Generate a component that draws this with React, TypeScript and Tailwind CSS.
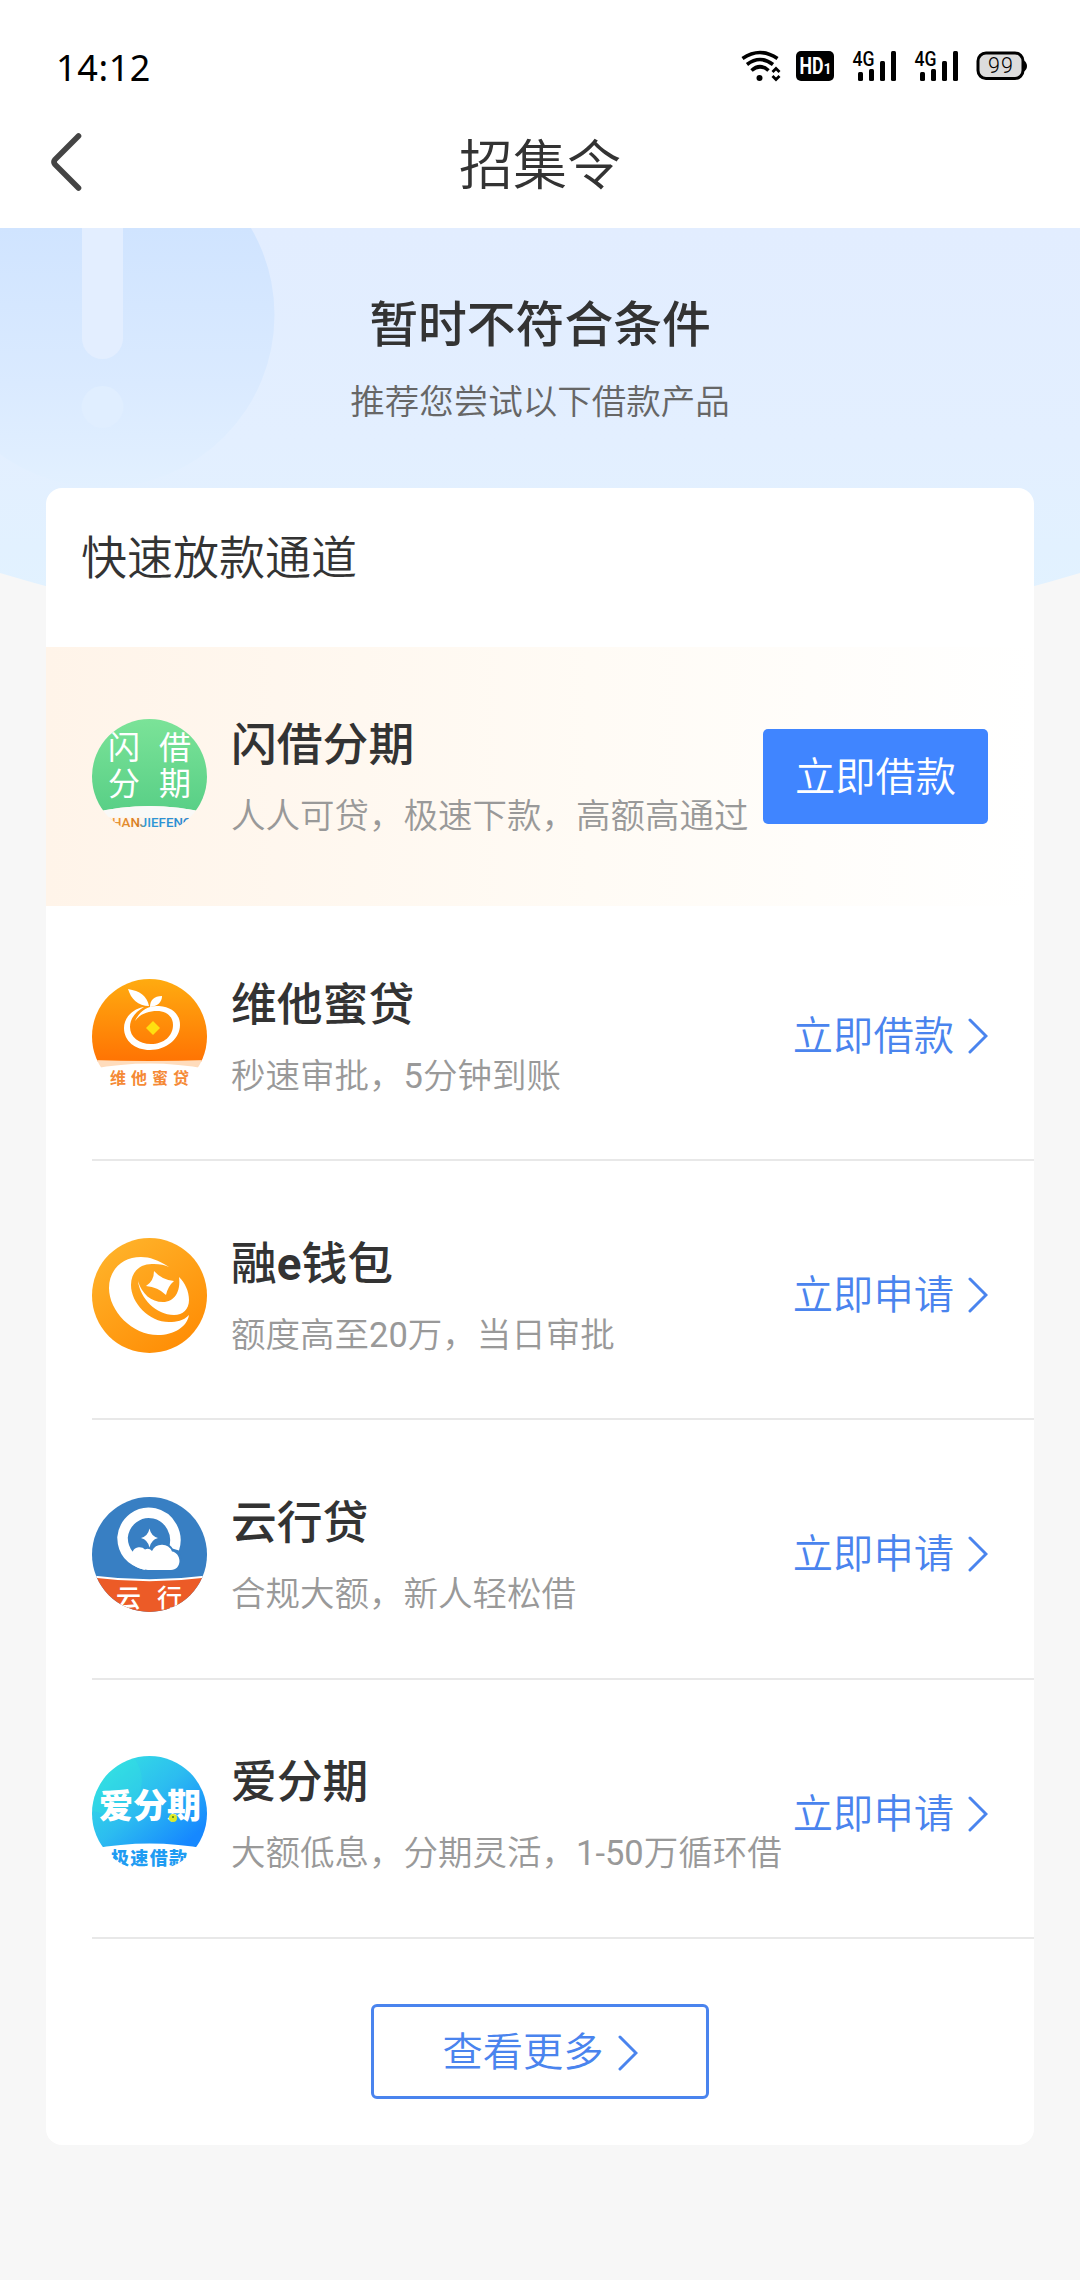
import type { ReactNode } from 'react';

const CJK = '"Noto Sans CJK SC"';

interface Product {
  name: ReactNode;
  desc: string;
  action: string;
  logo: ReactNode;
  featured?: boolean;
}

function Chevron() {
  return (
    <svg className="w-[20px] h-[36px] flex-shrink-0" viewBox="0 0 20 36" fill="none">
      <path d="M2 2L18 18L2 34" stroke="#4a84ee" strokeWidth="3" strokeLinecap="round" />
    </svg>
  );
}

function ShanjieLogo() {
  return (
    <svg className="w-[115px] h-[115px]" viewBox="0 0 115 115" fontFamily={CJK}>
      <defs>
        <linearGradient id="sj-green" x1="0" y1="0" x2="0" y2="1">
          <stop offset="0" stopColor="#7be398" />
          <stop offset="1" stopColor="#58cf86" />
        </linearGradient>
        <linearGradient id="sj-text" gradientUnits="userSpaceOnUse" x1="17" y1="0" x2="98" y2="0">
          <stop offset="0" stopColor="#f0a040" />
          <stop offset="0.36" stopColor="#d87a20" />
          <stop offset="0.44" stopColor="#2f9ad8" />
          <stop offset="1" stopColor="#2a86d0" />
        </linearGradient>
        <clipPath id="sj-clip">
          <circle cx="57.5" cy="57.5" r="57.5" />
        </clipPath>
      </defs>
      <g clipPath="url(#sj-clip)">
        <path d="M0 0H115V94Q57.5 80 0 94Z" fill="url(#sj-green)" />
        <path d="M0 94Q57.5 80 115 94V98H0Z" fill="#f9f9f7" />
      </g>
      <g fill="#fff" fontSize="32" fontWeight="400">
        <text x="16" y="40">闪</text>
        <text x="67" y="40">借</text>
        <text x="16" y="76">分</text>
        <text x="67" y="76">期</text>
      </g>
      <text
        x="12"
        y="108"
        fontSize="13.500"
        fontFamily="Roboto"
        fontWeight="500"
        textLength="88"
        lengthAdjust="spacingAndGlyphs"
        clipPath="url(#sj-clip)"
        fill="url(#sj-text)"
      >
        SHANJIEFENQ
      </text>
    </svg>
  );
}

function WeitaLogo() {
  return (
    <svg className="w-[115px] h-[115px]" viewBox="0 0 115 115">
      <defs>
        <linearGradient id="wt-orange" x1="0" y1="0" x2="0" y2="1">
          <stop offset="0" stopColor="#ffab10" />
          <stop offset="1" stopColor="#ff7303" />
        </linearGradient>
        <clipPath id="wt-clip">
          <circle cx="57.5" cy="57.5" r="57.5" />
        </clipPath>
      </defs>
      <g clipPath="url(#wt-clip)">
        <path d="M0 0H115V83Q57.5 81 0 83Z" fill="url(#wt-orange)" />
        <path d="M0 81Q57 83 115 81V90Q57.5 79 0 90Z" fill="#ffdcbc" />
      </g>
      <path
        fillRule="evenodd"
        d="M43 42C48 31 57 26 67 27C81 28 88 36 88 46C88 60 74 71 58 71C43 71 32 62 32 49C32 39 40 30 52 28C43 33 38 40 38 48C38 58 47 65 59 65C72 65 81 57 81 46C81 37 74 32 65 32C56 32 48 35 43 42Z"
        fill="#fff"
      />
      <path d="M36 10C48 12 55 17 57 27C46 27 39 20 36 10Z" fill="#fff" />
      <path d="M58 28C58 21 62 17 70 17C70 23 66 27 58 28Z" fill="#fff" />
      <path d="M61 42L68 49L61 56L54 49Z" fill="#ffdf10" />
      <text x="18" y="105" fontSize="16" fontWeight="700" letterSpacing="5" fontFamily={CJK} fill="#f58a36">
        维他蜜贷
      </text>
    </svg>
  );
}

function RongeLogo() {
  return (
    <svg className="w-[115px] h-[115px]" viewBox="0 0 115 115">
      <defs>
        <linearGradient id="re-orange" x1="0.1" y1="0" x2="0.8" y2="1">
          <stop offset="0" stopColor="#ffb52c" />
          <stop offset="1" stopColor="#ff8c04" />
        </linearGradient>
      </defs>
      <circle cx="57.5" cy="57.5" r="57.5" fill="url(#re-orange)" />
      <g fill="#fff">
        <path d="M77 29C66 22 58 19 49 19C30 19 17 32 17 50C17 73 40 97 66 97C82 97 95 89 97 77C91 83 85 84 77 84C57 84 39 65 39 47C39 33 49 25 62 26C68 26 73 27 77 29Z" />
        <path d="M46 43C48 60 64 77 82 77C91 77 97 71 97 62C97 53 93 45 87 39C89 54 82 64 71 64C59 64 50 56 46 43Z" />
        <path d="M62 33Q70 42 82 43Q76 48 74 57Q66 49 54 48Q62 43 62 33Z" />
      </g>
    </svg>
  );
}

function YunxingLogo() {
  return (
    <svg className="w-[115px] h-[115px]" viewBox="0 0 115 115">
      <defs>
        <clipPath id="yx-clip">
          <circle cx="57.5" cy="57.5" r="57.5" />
        </clipPath>
      </defs>
      <g clipPath="url(#yx-clip)">
        <rect width="115" height="115" fill="#387fc3" />
        <path d="M0 80Q57.5 86 115 80V115H0Z" fill="#ec5b27" />
        <path d="M0 79.5Q57.5 87 115 79.5" fill="none" stroke="#fff" strokeWidth="1.8" />
        <text x="24" y="110" fontSize="25" fontWeight="500" fontFamily={CJK} fill="#fff">云</text>
        <text x="65" y="110" fontSize="25" fontWeight="500" fontFamily={CJK} fill="#fff">行</text>
      </g>
      <path d="M82 52A26.500 27.500 0 1 0 30.500 40.500Q31 62 54 68" fill="none" stroke="#fff" strokeWidth="10.500" />
      {/* cloud, outlined so that it stands off the ring */}
      <path d="M60 54A11 11 0 0 1 80 54.500C85 55 88 59 88 64" fill="none" stroke="#387fc3" strokeWidth="4" />
      <path
        d="M41 54A7 6 0 0 1 53 52.500A6 6 0 0 1 60 54A11 11 0 0 1 80 54.500C84 55 87.500 59 87.500 64C87.500 69 84 73 79 73H56Q44 73 35 62Z"
        fill="#fff"
      />
      <path d="M57.500 31.500Q59 39 66 41Q59 43 57.500 50.500Q56 43 49 41Q56 39 57.500 31.500Z" fill="#fff" />
    </svg>
  );
}

function AifenqiLogo() {
  return (
    <svg className="w-[115px] h-[115px]" viewBox="0 0 115 115" fontFamily={CJK} fontWeight="900">
      <defs>
        <linearGradient id="af-blue" x1="0.1" y1="0.1" x2="0.9" y2="0.85">
          <stop offset="0" stopColor="#34dfe4" />
          <stop offset="0.5" stopColor="#2cbcf0" />
          <stop offset="1" stopColor="#1688ff" />
        </linearGradient>
        <clipPath id="af-clip">
          <circle cx="57.5" cy="57.5" r="57.5" />
        </clipPath>
      </defs>
      <g clipPath="url(#af-clip)">
        <path d="M0 0H115V93Q57.500 82 0 93Z" fill="url(#af-blue)" />
        <circle cx="16" cy="24" r="34" fill="#34e8dc" opacity="0.25" />
        <text x="19" y="109" fontSize="18" textLength="76" fill="#1f9cf2">极速借款</text>
      </g>
      <text x="7" y="62" fontSize="34" textLength="102" fill="#fff">爱分期</text>
      <circle cx="81" cy="62" r="4" fill="#dcea28" />
      <circle cx="81" cy="61" r="1" fill="#4a7a20" />
    </svg>
  );
}

const products: Product[] = [
  { name: '闪借分期', desc: '人人可贷，极速下款，高额高通过', action: '立即借款', logo: <ShanjieLogo />, featured: true },
  { name: '维他蜜贷', desc: '秒速审批，5分钟到账', action: '立即借款', logo: <WeitaLogo /> },
  {
    name: (
      <>
        融<span className="font-bold">e</span>钱包
      </>
    ),
    desc: '额度高至20万，当日审批',
    action: '立即申请',
    logo: <RongeLogo />,
  },
  { name: '云行贷', desc: '合规大额，新人轻松借', action: '立即申请', logo: <YunxingLogo /> },
  { name: '爱分期', desc: '大额低息，分期灵活，1-50万循环借', action: '立即申请', logo: <AifenqiLogo /> },
];

function Signal() {
  return (
    <svg className="w-[45px] h-[32px]" viewBox="0 0 45 32">
      <text x="0.500" y="16" fontSize="20" fontWeight="500" fontFamily="Roboto" textLength="22" lengthAdjust="spacingAndGlyphs">
        4G
      </text>
      <rect x="6" y="22" width="5" height="9" rx="1.500" />
      <rect x="17" y="19" width="5" height="12" rx="1.500" />
      <rect x="28" y="11" width="5" height="20" rx="1.500" />
      <rect x="39" y="1" width="5" height="30" rx="1.500" />
    </svg>
  );
}

function StatusBar() {
  return (
    <div className="h-[96px] pt-[36px] pl-[56px] pr-[53px] flex items-center justify-between text-black">
      <span className="pt-[4px] font-['Noto_Sans'] text-[36px] leading-[60px] tracking-[0.600px]">14:12</span>
      <div className="flex items-center">
        <svg className="w-[41px] h-[32px]" viewBox="0 0 41 32" fill="none" stroke="#000" strokeWidth="3.600">
          <path d="M1.500 8.500Q19 -3.500 36.500 8.500" />
          <path d="M6 14.500Q19 4.500 32 14.500" />
          <path d="M10.500 20.500Q19 13 27.500 20.500" />
          <circle cx="18.500" cy="28" r="3" fill="#000" stroke="none" />
          <path d="M31.500 22L35 18.500L38.500 22M31.500 26L35 29.500L38.500 26" strokeWidth="2.800" />
        </svg>
        <svg className="w-[38px] h-[32px] ml-[14px]" viewBox="0 0 38 32">
          <rect y="1" width="38" height="30" rx="5" />
          <text x="3.500" y="24" fontSize="23" fontWeight="700" fontFamily="Roboto" fill="#fff" textLength="24" lengthAdjust="spacingAndGlyphs">
            HD
          </text>
          <text x="27.500" y="23.500" fontSize="14" fontWeight="700" fontFamily="Roboto" fill="#fff">
            1
          </text>
        </svg>
        <div className="flex ml-[18px] gap-[17px]">
          <Signal />
          <Signal />
        </div>
        <svg className="w-[51px] h-[32px] ml-[17px]" viewBox="0 0 51 32">
          <rect x="2" y="3" width="45" height="25.500" rx="8" fill="#dcdcdc" stroke="#000" strokeWidth="3" />
          <path d="M47 10Q51 12 51 16Q51 20 47 22Z" />
          <text x="12" y="23" fontSize="21.500" fontFamily="Roboto" fontWeight="300" textLength="25">
            99
          </text>
        </svg>
      </div>
    </div>
  );
}

function BannerBackdrop() {
  return (
    <svg className="absolute inset-x-0 top-0 w-[1080px] h-[430px]" viewBox="0 0 1080 430">
      <defs>
        <linearGradient id="banner" x1="0" y1="0" x2="0" y2="1">
          <stop offset="0" stopColor="#e2edff" />
          <stop offset="0.5" stopColor="#e3efff" />
          <stop offset="1" stopColor="#e1f3ff" />
        </linearGradient>
        <linearGradient id="alert" gradientUnits="userSpaceOnUse" x1="0" y1="0" x2="0" y2="259">
          <stop offset="0" stopColor="#d0e4ff" />
          <stop offset="0.6" stopColor="#daeaff" />
          <stop offset="1" stopColor="#e2f0ff" />
        </linearGradient>
      </defs>
      <path d="M0 0H1080V345Q540 507 0 345Z" fill="url(#banner)" />
      <circle cx="102" cy="87" r="172.500" fill="url(#alert)" />
      <rect x="82" y="-30" width="41" height="161" rx="20.500" fill="#e3eeff" />
      <circle cx="102.500" cy="179" r="21" fill="#e0eeff" />
    </svg>
  );
}

function ProductRow({ product }: { product: Product }) {
  const { name, desc, action, logo, featured } = product;
  return (
    <div className={featured ? 'bg-gradient-to-r from-[#fff4e9] via-[#fffbf5] via-55% to-white pl-[46px]' : 'pl-[46px]'}>
      <div
        className={
          featured
            ? 'h-[259px] flex items-center pr-[46px]'
            : 'h-[259.200px] -mt-[4px] mb-[4px] pt-[11px] flex items-center pr-[46px] border-b-2 border-[#e8e8e8]'
        }
      >
        <div className="w-[115px] h-[115px] flex-shrink-0">{logo}</div>
        <div className="pt-[2px] ml-[24px] flex-1 min-w-0 whitespace-nowrap">
          <h3 className="text-[45.800px] leading-[64px] font-medium text-[#333]">{name}</h3>
          <p className="mt-[13px] text-[34.500px] leading-[50px] font-[350] text-[#999]">
            {/* Roboto has no demi-light cut, digits look too thin without this */}
            {desc.split(/([\d-]+)/).map((part, i) => (
              <span key={i} className={i % 2 ? 'font-normal' : ''}>
                {part}
              </span>
            ))}
          </p>
        </div>
        {featured ? (
          <button className="w-[225px] h-[95px] pt-[3px] flex-shrink-0 rounded-[5px] bg-[#4085ff] text-white text-[40.300px] font-[350]">
            {action}
          </button>
        ) : (
          <button className="flex flex-shrink-0 items-center gap-[14px] text-[40.300px] leading-[60px] font-[350] text-[#4a84ee]">
            <span className="pt-[2px]">{action}</span>
            <Chevron />
          </button>
        )}
      </div>
    </div>
  );
}

export default function App() {
  return (
    <div className="w-[1080px] h-[2280px] bg-[#f7f7f7] overflow-hidden font-[Roboto,'Noto_Sans_CJK_SC',sans-serif]">
      <header className="h-[228px] bg-white">
        <StatusBar />
        <div className="h-[132px] px-[50px] grid grid-cols-[60px_1fr_60px] items-center">
          <svg className="w-[32px] h-[60px]" viewBox="0 0 32 60" fill="none">
            <path d="M28.500 4L5 27.500Q3 30 5 32.500L28.500 56" stroke="#444" strokeWidth="5.600" strokeLinecap="round" />
          </svg>
          <h1 className="pt-[10px] text-center text-[54px] leading-[80px] font-[350] text-[#333]">招集令</h1>
        </div>
      </header>

      <section className="relative">
        <BannerBackdrop />
        <div className="relative h-[260px] pt-[63px] text-center">
          <h2 className="text-[48.800px] leading-[70px] font-medium text-[#333]">暂时不符合条件</h2>
          <p className="mt-[13px] text-[34.500px] leading-[56px] font-[350] text-[#666]">推荐您尝试以下借款产品</p>
        </div>

        <div className="relative mx-[46px] h-[1657px] bg-white rounded-[16px]">
          <h2 className="h-[159px] pl-[35px] pt-[37px] text-[46px] leading-[66px] font-[350] text-[#333]">快速放款通道</h2>
          {products.map((product) => (
            <ProductRow key={product.desc} product={product} />
          ))}
          <button className="mt-[65px] mx-auto w-[338px] h-[95px] pt-[3px] border-[3px] border-[#4a84ee] rounded-[6px] flex items-center justify-center gap-[14px] text-[40.300px] font-[350] text-[#4a84ee]">
            查看更多
            <Chevron />
          </button>
        </div>
      </section>
    </div>
  );
}
